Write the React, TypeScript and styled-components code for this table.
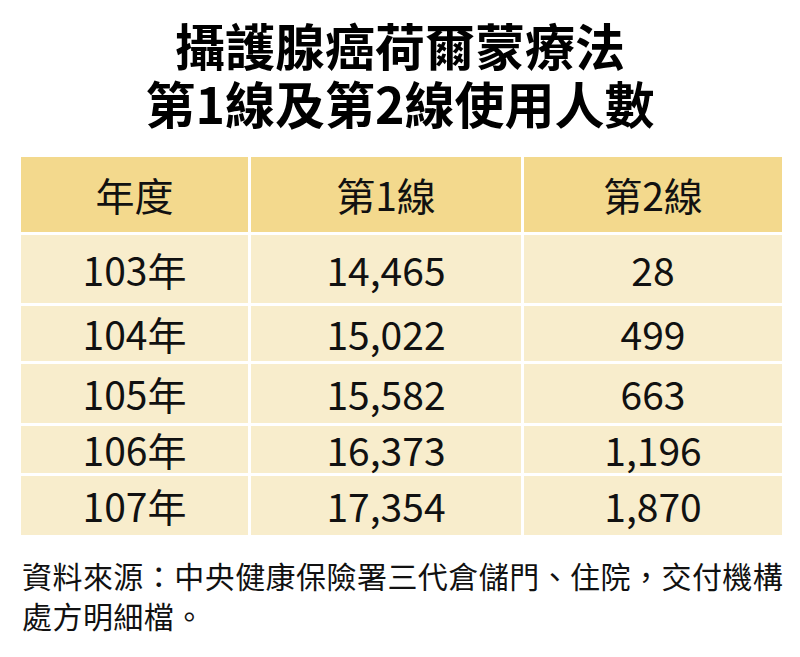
import React from "react";
import styled, { createGlobalStyle } from "styled-components";

const Global = createGlobalStyle`
  html, body { margin: 0; padding: 0; background: #ffffff; }
  body { font-family: "Noto Sans CJK TC", "Noto Sans", sans-serif; color: #111; }
`;

const Page = styled.div`
  width: 800px;
  height: 657px;
  box-sizing: border-box;
  padding-top: 15px;
  display: flex;
  flex-direction: column;
  overflow: hidden;
`;

const Title = styled.h1`
  margin: 0;
  display: flex;
  flex-direction: column;
  align-items: center;
  font-family: "Noto Sans CJK TC", sans-serif;
  font-weight: 700;
  font-size: 50px;
  color: #000;
`;

const TitleLine = styled.span`
  display: block;
  height: 58px;
  line-height: 58px;
`;

const Table = styled.div`
  margin: 26px 18px 0 21px;
  display: grid;
  grid-template-columns: 227px 270px 1fr;
  grid-template-rows: 75px 68px 55px 59px 47px 59px;
  gap: 3px;
`;

const Cell = styled.div<{ $head?: boolean }>`
  display: flex;
  align-items: center;
  justify-content: center;
  background: ${(p) => (p.$head ? "#F3D98D" : "#F8EDCC")};
  font-family: "Noto Sans CJK TC", sans-serif;
  font-size: 39px;
  font-weight: 400;
  color: #111;
  line-height: 1;
`;

const Note = styled.div`
  margin: 20px 0 0 22px;
  display: flex;
  flex-direction: column;
  font-family: "Noto Sans CJK TC", sans-serif;
  font-size: 30px;
  letter-spacing: 0.45px;
  line-height: 40px;
  color: #111;
`;

const NoteLine = styled.span`
  white-space: nowrap;
`;

const rows: [string, string, string][] = [
  ["103年", "14,465", "28"],
  ["104年", "15,022", "499"],
  ["105年", "15,582", "663"],
  ["106年", "16,373", "1,196"],
  ["107年", "17,354", "1,870"],
];

export default function App() {
  return (
    <>
      <Global />
      <Page>
        <Title>
          <TitleLine>攝護腺癌荷爾蒙療法</TitleLine>
          <TitleLine>第1線及第2線使用人數</TitleLine>
        </Title>
        <Table>
          <Cell $head>年度</Cell>
          <Cell $head>第1線</Cell>
          <Cell $head>第2線</Cell>
          {rows.map((r) =>
            r.map((v, i) => <Cell key={r[0] + i}>{v}</Cell>)
          )}
        </Table>
        <Note>
          <NoteLine>資料來源：中央健康保險署三代倉儲門、住院，交付機構</NoteLine>
          <NoteLine>處方明細檔。</NoteLine>
        </Note>
      </Page>
    </>
  );
}
